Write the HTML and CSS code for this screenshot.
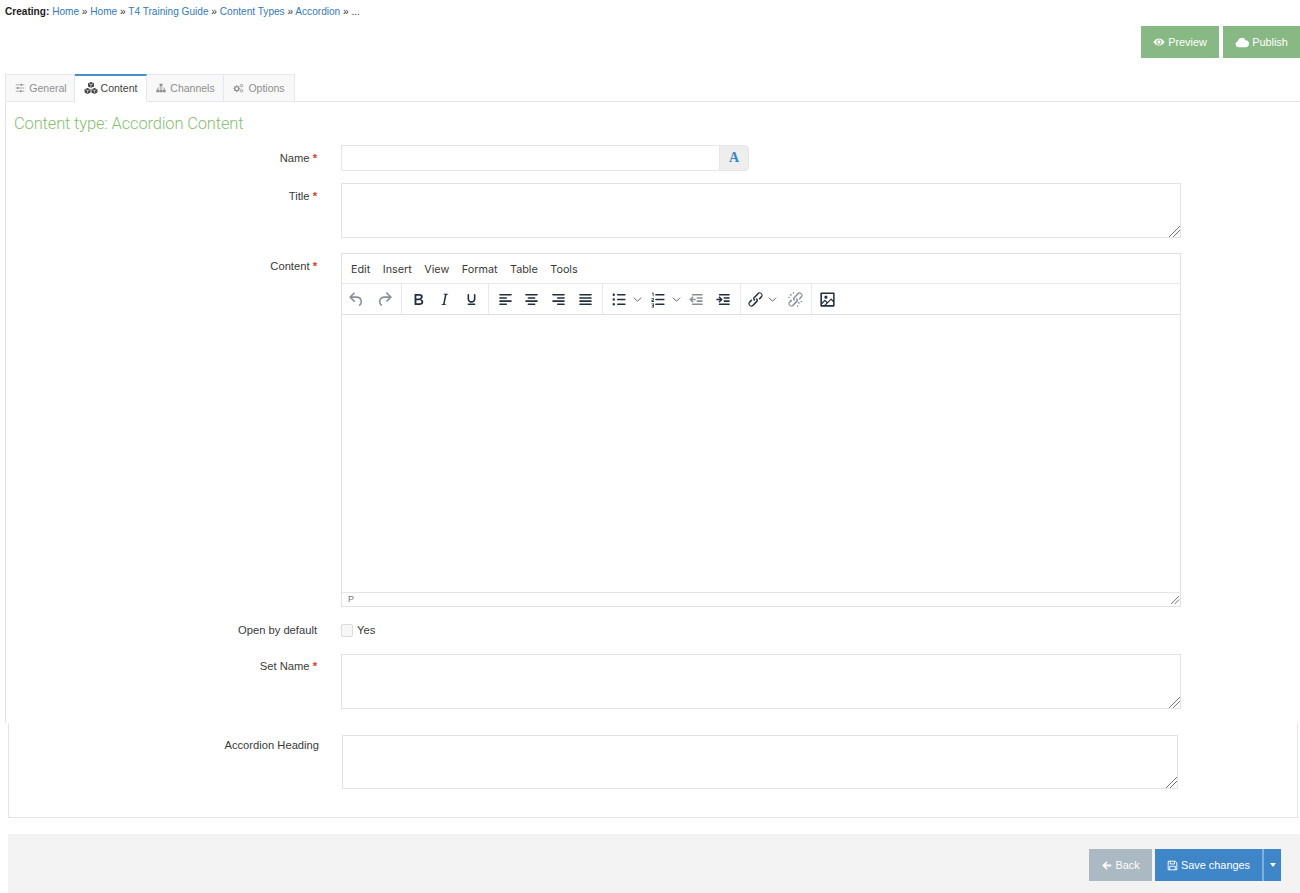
FILE: index.html
```html
<!DOCTYPE html>
<html lang="en">
<head>
<meta charset="utf-8">
<title>Creating content</title>
<link rel="stylesheet" href="styles.css">
</head>
<body>
<svg class="sprite" aria-hidden="true">
  <symbol id="i-undo" viewBox="0 0 24 24"><path d="M6.4 8H12c3.7 0 6.2 2 6.8 5.1.6 2.7-.4 5.6-2.3 6.8a1 1 0 0 1-1-1.8c1.1-.6 1.8-2.7 1.4-4.6-.5-2.1-2.1-3.5-4.9-3.5H6.4l3.3 3.3a1 1 0 1 1-1.4 1.4l-5-5a1 1 0 0 1 0-1.4l5-5a1 1 0 0 1 1.4 1.4L6.4 8z"/></symbol>
  <symbol id="i-redo" viewBox="0 0 24 24"><path d="M17.6 10H12c-2.8 0-4.4 1.4-4.9 3.5-.4 2 .3 4 1.4 4.6a1 1 0 1 1-1 1.8c-2-1.2-2.9-4.1-2.3-6.8.6-3 3-5.1 6.8-5.1h5.6l-3.3-3.3a1 1 0 1 1 1.4-1.4l5 5a1 1 0 0 1 0 1.4l-5 5a1 1 0 0 1-1.4-1.4l3.3-3.3z"/></symbol>
  <symbol id="i-bold" viewBox="0 0 24 24"><path d="M7.8 19c-.3 0-.5 0-.6-.2l-.2-.5V5.7c0-.2 0-.4.2-.5l.6-.2h5c1.5 0 2.7.3 3.5 1 .7.6 1.1 1.4 1.1 2.5a3 3 0 0 1-.6 1.9c-.4.6-1 1-1.6 1.2.4.1.9.3 1.3.6s.8.7 1 1.2c.4.4.5 1 .5 1.6 0 1.3-.4 2.3-1.3 3-.8.7-2.1 1-3.8 1H7.8zm5-8.3c.6 0 1.2-.1 1.6-.5.4-.3.6-.7.6-1.3 0-1.1-.8-1.7-2.3-1.7H9.3v3.5h3.4zm.5 6c.7 0 1.3-.1 1.7-.4.4-.4.6-.9.6-1.5s-.2-1-.7-1.4c-.4-.3-1-.4-2-.4H9.4v3.8h4z"/></symbol>
  <symbol id="i-italic" viewBox="0 0 24 24"><path d="M16.7 4.7l-.1.9h-.3c-.6 0-1 0-1.4.3-.3.3-.4.6-.5 1.1l-2.1 9.8v.6c0 .5.4.8 1.4.8h.2l-.2.8H8l.2-.8h.2c1.1 0 1.8-.5 2-1.5l2-9.8.1-.5c0-.6-.4-.8-1.4-.8h-.3l.2-.9h5.8z"/></symbol>
  <symbol id="i-underline" viewBox="0 0 24 24"><path d="M16 5c.6 0 1 .4 1 1v5.5a4 4 0 0 1-.4 1.8l-1 1.4a5.3 5.3 0 0 1-5.5 1 5 5 0 0 1-1.6-1c-.5-.4-.8-.9-1.1-1.4a4 4 0 0 1-.4-1.8V6c0-.6.4-1 1-1s1 .4 1 1v5.5c0 .3 0 .6.2 1l.6.7a3.3 3.3 0 0 0 2.2.8 3.4 3.4 0 0 0 2.2-.8c.3-.2.4-.5.6-.8l.2-.9V6c0-.6.4-1 1-1zM8 17h8c.6 0 1 .4 1 1s-.4 1-1 1H8a1 1 0 0 1 0-2z"/></symbol>
  <symbol id="i-left" viewBox="0 0 24 24"><path d="M5 5h14a1 1 0 0 1 0 2H5a1 1 0 1 1 0-2zm0 4h8a1 1 0 0 1 0 2H5a1 1 0 1 1 0-2zm0 8h8a1 1 0 0 1 0 2H5a1 1 0 0 1 0-2zm0-4h14a1 1 0 0 1 0 2H5a1 1 0 0 1 0-2z"/></symbol>
  <symbol id="i-center" viewBox="0 0 24 24"><path d="M5 5h14a1 1 0 0 1 0 2H5a1 1 0 1 1 0-2zm3 4h8a1 1 0 0 1 0 2H8a1 1 0 1 1 0-2zm0 8h8a1 1 0 0 1 0 2H8a1 1 0 0 1 0-2zm-3-4h14a1 1 0 0 1 0 2H5a1 1 0 0 1 0-2z"/></symbol>
  <symbol id="i-right" viewBox="0 0 24 24"><path d="M5 5h14a1 1 0 0 1 0 2H5a1 1 0 1 1 0-2zm6 4h8a1 1 0 0 1 0 2h-8a1 1 0 0 1 0-2zm0 8h8a1 1 0 0 1 0 2h-8a1 1 0 0 1 0-2zm-6-4h14a1 1 0 0 1 0 2H5a1 1 0 0 1 0-2z"/></symbol>
  <symbol id="i-justify" viewBox="0 0 24 24"><path d="M5 5h14a1 1 0 0 1 0 2H5a1 1 0 1 1 0-2zm0 4h14a1 1 0 0 1 0 2H5a1 1 0 1 1 0-2zm0 4h14a1 1 0 0 1 0 2H5a1 1 0 0 1 0-2zm0 4h14a1 1 0 0 1 0 2H5a1 1 0 0 1 0-2z"/></symbol>
  <symbol id="i-bullist" viewBox="0 0 24 24"><path d="M11 5h9a1 1 0 0 1 0 2h-9a1 1 0 0 1 0-2zm0 6h9a1 1 0 0 1 0 2h-9a1 1 0 0 1 0-2zm0 6h9a1 1 0 0 1 0 2h-9a1 1 0 0 1 0-2zM4.500 6a1.500 1.500 0 1 1 3 0 1.500 1.500 0 0 1-3 0zm0 6a1.500 1.500 0 1 1 3 0 1.500 1.500 0 0 1-3 0zm0 6a1.500 1.500 0 1 1 3 0 1.500 1.500 0 0 1-3 0z"/></symbol>
  <symbol id="i-numlist" viewBox="0 0 24 24"><path d="M10 5h10a1 1 0 0 1 0 2H10a1 1 0 0 1 0-2zm0 6h10a1 1 0 0 1 0 2H10a1 1 0 0 1 0-2zm0 6h10a1 1 0 0 1 0 2H10a1 1 0 0 1 0-2zM5 3.500h2v4.500H6V4.500H5zM4.500 10.500h3v2.700h-2v.800h2v1h-3v-2.700h2v-.800h-2zM4.500 17h3v5h-3v-1h2v-1h-1.500v-1h1.500v-1h-2z"/></symbol>
  <symbol id="i-outdent" viewBox="0 0 24 24"><path d="M7 5h12a1 1 0 0 1 0 2H7a1 1 0 0 1 0-2zm6 4h6a1 1 0 0 1 0 2h-6a1 1 0 0 1 0-2zm0 4h6a1 1 0 0 1 0 2h-6a1 1 0 0 1 0-2zm-6 4h12a1 1 0 0 1 0 2H7a1 1 0 0 1 0-2zM8.300 9.300L6.600 11H11v2H6.600l1.700 1.700-1.300 1.300-4-4 4-4z"/></symbol>
  <symbol id="i-indent" viewBox="0 0 24 24"><path d="M7 5h12a1 1 0 0 1 0 2H7a1 1 0 0 1 0-2zm6 4h6a1 1 0 0 1 0 2h-6a1 1 0 0 1 0-2zm0 4h6a1 1 0 0 1 0 2h-6a1 1 0 0 1 0-2zm-6 4h12a1 1 0 0 1 0 2H7a1 1 0 0 1 0-2zM5.700 9.300L7.400 11H3v2h4.400l-1.700 1.700L7 16l4-4-4-4z"/></symbol>
  <symbol id="i-link" viewBox="0 0 24 24"><path d="M6.200 12.300a1 1 0 0 1 1.400 1.400l-2.100 2a2 2 0 1 0 2.700 2.800l4.800-4.800a1 1 0 0 0 0-1.400 1 1 0 1 1 1.400-1.300 2.900 2.900 0 0 1 0 4L9.600 20a3.900 3.900 0 0 1-5.500-5.500l2-2.200zm11.600-.6a1 1 0 0 1-1.400-1.400l2-2a2 2 0 1 0-2.600-2.800L11 10.300a1 1 0 0 0 0 1.400A1 1 0 1 1 9.600 13a2.900 2.900 0 0 1 0-4L14.400 4a3.900 3.900 0 0 1 5.500 5.500l-2 2.200z"/></symbol>
  <symbol id="i-unlink" viewBox="0 0 24 24"><path d="M6.200 12.300a1 1 0 0 1 1.400 1.400l-2 2a2 2 0 1 0 2.600 2.800l4.800-4.800a1 1 0 0 0 0-1.400 1 1 0 1 1 1.400-1.300 2.900 2.900 0 0 1 0 4L9.600 20a3.900 3.900 0 0 1-5.500-5.500l2-2.200zm11.600-.6a1 1 0 0 1-1.400-1.400l2.100-2a2 2 0 1 0-2.700-2.800L11 10.300a1 1 0 0 0 0 1.400A1 1 0 1 1 9.600 13a2.900 2.900 0 0 1 0-4L14.400 4a3.900 3.900 0 0 1 5.500 5.500l-2 2.200zM7.600 6.300L6.300 7.600 4.700 6 6 4.700zm10.100 10.100l-1.300 1.300-1.600-1.600 1.300-1.300zM8.500 2.500h1.300l.4 2.200H8.900zM2.500 8.500v1.300l2.200.4V8.900zM20.500 15.500v-1.300l-2.200-.4v1.300zM15.500 21.500h-1.300l-.4-2.200h1.300z"/></symbol>
  <symbol id="i-image" viewBox="0 0 24 24"><path d="M5 15.700l3.300-3.200c.3-.3.700-.3 1 0L12 15l4.100-4.100c.3-.4.800-.4 1 0l2 1.900V5H5v10.700zM5 18v1h3l2.800-2.900-2-2L5 17.900zm14-3l-2.500-2.400-6.400 6.500H19v-4zM4 3h16c.6 0 1 .4 1 1v16c0 .6-.4 1-1 1H4a1 1 0 0 1-1-1V4c0-.6.4-1 1-1zm6 8a2 2 0 1 0 0-4 2 2 0 0 0 0 4z"/></symbol>
  <symbol id="i-chev" viewBox="0 0 10 10"><path d="M1 3l4 4 4-4" fill="none" stroke="currentColor" stroke-width="1.100"/></symbol>
</svg>

<div class="page">
  <div class="crumbs"><b>Creating:</b> <a>Home</a> » <a>Home</a> » <a>T4 Training Guide</a> » <a>Content Types</a> » <a>Accordion</a> » ...</div>

  <div class="actions">
    <button class="btn btn-green btn-preview" type="button">
      <svg class="fa" viewBox="0 0 16 16" width="12" height="12"><path fill="currentColor" d="M8 3.300C4.700 3.300 2 5.500.5 8c1.500 2.500 4.200 4.700 7.500 4.700s6-2.200 7.500-4.700C14 5.500 11.300 3.300 8 3.300zm0 8.200A3.500 3.500 0 1 1 8 4.500a3.500 3.500 0 0 1 0 7zm0-5.700A2.200 2.200 0 1 0 8 10.200 2.200 2.200 0 0 0 8 5.800z"/></svg>
      Preview
    </button>
    <button class="btn btn-green btn-publish" type="button">
      <svg class="fa" viewBox="0 0 16 14" width="14" height="12"><path fill="currentColor" d="M4 13a3.500 3.500 0 0 1-.9-6.900A4.800 4.800 0 0 1 12.200 5 4 4 0 0 1 12 13z"/></svg>
      Publish
    </button>
  </div>

  <div class="tabs">
    <div class="tab tab-general">
      <svg class="fa" viewBox="0 0 14 14" width="10" height="10"><path fill="none" stroke="currentColor" d="M1 2.500h12M1 7h12M1 11.500h12"/><path fill="currentColor" d="M8 1h2v3H8zM3 5.500h2v3H3zM7 10h2v3H7z"/></svg>
      General
    </div>
    <div class="tab tab-active tab-content">
      <svg class="fa" viewBox="0 0 16 14" width="14" height="12"><path fill="currentColor" d="M8 0l3.500 1.500v3.800L8 6.800 4.500 5.300V1.500zM4 7l3.500 1.500v3.800L4 14 .5 12.300V8.500zM12 7l3.500 1.500v3.800L12 14l-3.500-1.700V8.500z"/><path fill="none" stroke="#fff" stroke-width=".7" d="M5.500 2L8 3l2.500-1M8 3v3M1.500 9L4 10l2.500-1M4 10v3M9.500 9L12 10l2.500-1M12 10v3"/></svg>
      Content
    </div>
    <div class="tab tab-channels">
      <svg class="fa" viewBox="0 0 14 14" width="10" height="10"><path fill="currentColor" d="M5 1h4v3.500H7.500V6.500H12V9.500h1.500V13h-4V9.500H11V7.500H7.500V9.500H9V13H5V9.500H6.500V7.500H3V9.500h1.500V13h-4V9.500H2V6.500H6.500V4.500H5z"/></svg>
      Channels
    </div>
    <div class="tab tab-options">
      <svg class="fa" viewBox="0 0 16 14" width="11" height="10"><circle cx="5.500" cy="8" r="3" fill="none" stroke="currentColor" stroke-width="2"/><path fill="none" stroke="currentColor" stroke-width="1.300" d="M5.500 2.800v1.500M5.500 11.700v1.500M.5 8h1.500M9 8h1.500M2 4.500l1 1M8 10.500l1 1M2 11.500l1-1M8 5.500l1-1"/><circle cx="12.500" cy="3.500" r="1.800" fill="none" stroke="currentColor" stroke-width="1.200"/><circle cx="12.500" cy="11" r="1.800" fill="none" stroke="currentColor" stroke-width="1.200"/></svg>
      Options
    </div>
  </div>

  <div class="panel">
    <h1 class="heading">Content type: Accordion Content</h1>

    <div class="row row-name">
      <label class="label">Name <span class="req">*</span></label>
      <div class="input-group">
        <input class="input" type="text">
        <span class="addon">A</span>
      </div>
    </div>

    <div class="row row-title">
      <label class="label">Title <span class="req">*</span></label>
      <textarea class="area"></textarea>
    </div>

    <div class="row row-content">
      <label class="label">Content <span class="req">*</span></label>
      <div class="editor">
        <div class="menubar">
          <span>Edit</span><span>Insert</span><span>View</span><span>Format</span><span>Table</span><span>Tools</span>
        </div>
        <div class="toolbar">
          <div class="tgroup tg-history">
            <span class="tb tb-wide muted"><svg><use href="#i-undo"/></svg></span>
            <span class="tb tb-wide muted"><svg><use href="#i-redo"/></svg></span>
          </div>
          <div class="tgroup tg-format">
            <span class="tb"><svg><use href="#i-bold"/></svg></span>
            <span class="tb"><svg><use href="#i-italic"/></svg></span>
            <span class="tb"><svg><use href="#i-underline"/></svg></span>
          </div>
          <div class="tgroup tg-align">
            <span class="tb"><svg><use href="#i-left"/></svg></span>
            <span class="tb"><svg><use href="#i-center"/></svg></span>
            <span class="tb"><svg><use href="#i-right"/></svg></span>
            <span class="tb"><svg><use href="#i-justify"/></svg></span>
          </div>
          <div class="tgroup tg-lists">
            <span class="tb"><svg><use href="#i-bullist"/></svg></span>
            <span class="chev"><svg><use href="#i-chev"/></svg></span>
            <span class="tb"><svg><use href="#i-numlist"/></svg></span>
            <span class="chev"><svg><use href="#i-chev"/></svg></span>
            <span class="tb muted"><svg><use href="#i-outdent"/></svg></span>
            <span class="tb"><svg><use href="#i-indent"/></svg></span>
          </div>
          <div class="tgroup tg-link">
            <span class="tb tb-narrow"><svg><use href="#i-link"/></svg></span>
            <span class="chev"><svg><use href="#i-chev"/></svg></span>
            <span class="tb tb-gap muted"><svg><use href="#i-unlink"/></svg></span>
          </div>
          <div class="tgroup tg-image">
            <span class="tb"><svg><use href="#i-image"/></svg></span>
          </div>
        </div>
        <div class="edit-area"></div>
        <div class="statusbar">P</div>
        <svg class="grip" viewBox="0 0 10 10" width="9" height="9"><path fill="none" stroke="#666" d="M0 9L9 0M4 9l5-5"/></svg>
      </div>
    </div>

    <div class="row row-check">
      <label class="label label-check">Open by default</label>
      <label class="check-line"><span class="check"></span>Yes</label>
    </div>

    <div class="row row-set">
      <label class="label label-set">Set Name <span class="req">*</span></label>
      <textarea class="area"></textarea>
    </div>
  </div>

  <div class="panel-second">
    <label class="label label-second">Accordion Heading</label>
    <textarea class="area area-second"></textarea>
  </div>

  <div class="footer">
    <button class="btn btn-back" type="button">
      <svg class="fa" viewBox="0 0 14 14" width="11" height="11"><path fill="currentColor" d="M7 1.500l1.500 1.500-2.800 2.800H13v2.400H5.700L8.500 11 7 12.500 1.500 7z"/></svg>
      Back
    </button>
    <button class="btn btn-blue btn-save" type="button">
      <svg class="fa" viewBox="0 0 14 14" width="11" height="11"><path fill="none" stroke="currentColor" stroke-width="1.200" d="M1.500 1.500h9l2 2v9h-11zM4 1.500v3.500h5.500v-3.500M3.500 12.500V8h7v4.500"/></svg>
      Save changes
    </button>
    <button class="btn btn-blue btn-caret" type="button" aria-label="More"><span class="caret"></span></button>
  </div>
</div>
</body>
</html>
```

FILE: styles.css
```css
* { box-sizing: border-box; }
html, body { margin: 0; padding: 0; background: #fff; }
body { font-family: "Liberation Sans", Arial, sans-serif; font-size: 11.2px; color: #333; }
.sprite { display: none; }
.page { width: 1300px; height: 893px; overflow: hidden; }

.crumbs { padding: 5px 0 0 5px; line-height: 13px; font-size: 10.1px; color: #333; }
.crumbs b { color: #222; }
.crumbs a { color: #337ab7; }

.actions { display: flex; justify-content: flex-end; gap: 4px; margin-top: 8px; }
.btn { display: inline-flex; align-items: center; justify-content: center; gap: 3px; height: 32px; border: 0; padding: 0; color: #fff; font: 10.9px "Liberation Sans", Arial, sans-serif; }
.btn-green { background: #88b883; }
.btn-preview { width: 78px; }
.btn-publish { width: 77px; }

.tabs { display: flex; height: 28px; margin: 16px 0 -1px 5px; position: relative; z-index: 1; }
.tab { display: flex; align-items: center; justify-content: center; gap: 4px; height: 28px; color: #8f8f8f; background: #f8f8f8; border: 1px solid #e4e8ee; border-left: 0; font-size: 10.5px; }
.tab-general { width: 70px; padding-left: 2px; border-left: 1px solid #e4e8ee; }
.tab-content { width: 72px; gap: 3px; padding-bottom: 1px; }
.tab-channels { width: 77px; padding-left: 1px; }
.tab-options { width: 71px; }
.tab-active { background: #fff; color: #444; border-top: 2px solid #4a90c8; border-bottom-color: #fff; }

.panel { margin-left: 5px; border-top: 1px solid #e3e5ea; border-left: 1px solid #e3e5ea; height: 622px; }
.heading { margin: 10px 0 0 8px; font: 300 16.500px/23px Roboto, "Liberation Sans", sans-serif; letter-spacing: -.15px; color: #88c070; }

.row { display: grid; grid-template-columns: 311px 840px; column-gap: 24px; }
.row-name { margin-top: 10px; }
.row-title { margin-top: 12px; }
.row-content { margin-top: 15px; }
.row-check { margin-top: 17px; align-items: start; height: 13px; line-height: 13px; }
.row-set { margin-top: 17px; }

.label { display: block; text-align: right; padding-top: 5px; line-height: 16px; color: #3a3a3a; }
.label-check { padding-top: 0; line-height: 13px; }
.label-set { padding-top: 4px; }
.req { color: #e0342b; font-weight: bold; }

.input-group { display: flex; height: 26px; }
.input { flex: 0 0 378px; height: 26px; border: 1px solid #e6e6e6; border-right: 0; background: #fff; margin: 0; padding: 0 6px; outline: 0; }
.addon { width: 30px; height: 26px; display: flex; align-items: center; justify-content: center; background: #eee; border: 1px solid #e6e6e6; border-radius: 0 4px 4px 0; color: #3d85c6; font: bold 14px "Liberation Serif", serif; }

.area { display: block; width: 840px; height: 55px; margin: 0; padding: 4px 6px; background: #fff; border: 1px solid #e4e4e4; border-radius: 0; outline: 0; resize: both; font: 11.2px "Liberation Sans", sans-serif; }
.area::-webkit-resizer { background: linear-gradient(135deg, transparent 61%, #777 61%, #777 66%, transparent 66%, transparent 74%, #777 74%, #777 79%, transparent 79%); }

.editor { position: relative; width: 840px; height: 354px; border: 1px solid #e2e2e2; display: flex; flex-direction: column; }
.menubar { display: flex; align-items: center; gap: 12.500px; height: 30px; padding: 1px 0 0 9px; border-bottom: 1px solid #e8e8e8; font: 10.800px "Inter", "Liberation Sans", sans-serif; color: #3a3a3a; flex: none; }
.toolbar { display: flex; height: 31px; border-bottom: 1px solid #e0e0e0; flex: none; }
.tgroup { display: flex; align-items: center; height: 30px; border-right: 1px solid #e8e8e8; }
.tg-history { width: 60px; padding-left: 1px; }
.tg-format { width: 87px; padding-left: 3px; }
.tg-align { width: 114px; padding-left: 3px; }
.tg-lists { width: 138px; padding-left: 2px; }
.tg-link { width: 71px; padding-left: 3px; }
.tg-image { width: 40px; padding-left: 2px; border-right: 0; }
.tb { display: flex; align-items: center; justify-content: center; width: 26.600px; height: 30px; color: #222f3e; flex: none; }
.tb svg { width: 19px; height: 19px; fill: currentColor; }
.tb-wide { width: 27.500px; }
.tb-narrow { width: 22px; }
.tb-gap { margin-left: 3.500px; }
.muted { color: #8a9099; }
.chev { display: flex; align-items: center; justify-content: center; width: 12.500px; height: 30px; color: #666; flex: none; }
.chev svg { width: 9px; height: 9px; }
.edit-area { flex: 1; background: #fff; }
.statusbar { height: 14px; flex: none; border-top: 1px solid #e6e6e6; padding-left: 6px; font: 9px/13px "Liberation Sans", sans-serif; color: #777; }
.grip { position: absolute; right: 0; bottom: 1px; }

.check-line { display: flex; align-items: center; gap: 4px; height: 13px; color: #3a3a3a; }
.check { display: block; width: 12px; height: 13px; background: #f7f7f7; border: 1px solid #dcdcdc; border-radius: 2px; }

.panel-second { display: grid; grid-template-columns: 310px 836px; column-gap: 23px; align-items: start; height: 95px; margin: 0 2px 0 8px; padding-top: 12px; border: 1px solid #e3e5ea; border-top: 0; }
.label-second { padding-top: 2px; }
.area-second { width: 836px; height: 54px; }

.footer { display: flex; justify-content: flex-end; gap: 3px; height: 59px; margin: 16px 0 0 8px; padding: 15px 19px 0 0; background: #f3f3f3; }
.btn-back { width: 63px; background: #aab9c2; }
.btn-blue { background: #3f86c8; }
.btn-save { width: 107px; }
.btn-caret { width: 19px; margin-left: -3px; border-left: 2px solid #7fb0dc; }
.caret { width: 0; height: 0; border-left: 3.500px solid transparent; border-right: 3.500px solid transparent; border-top: 4px solid #fff; }
```
